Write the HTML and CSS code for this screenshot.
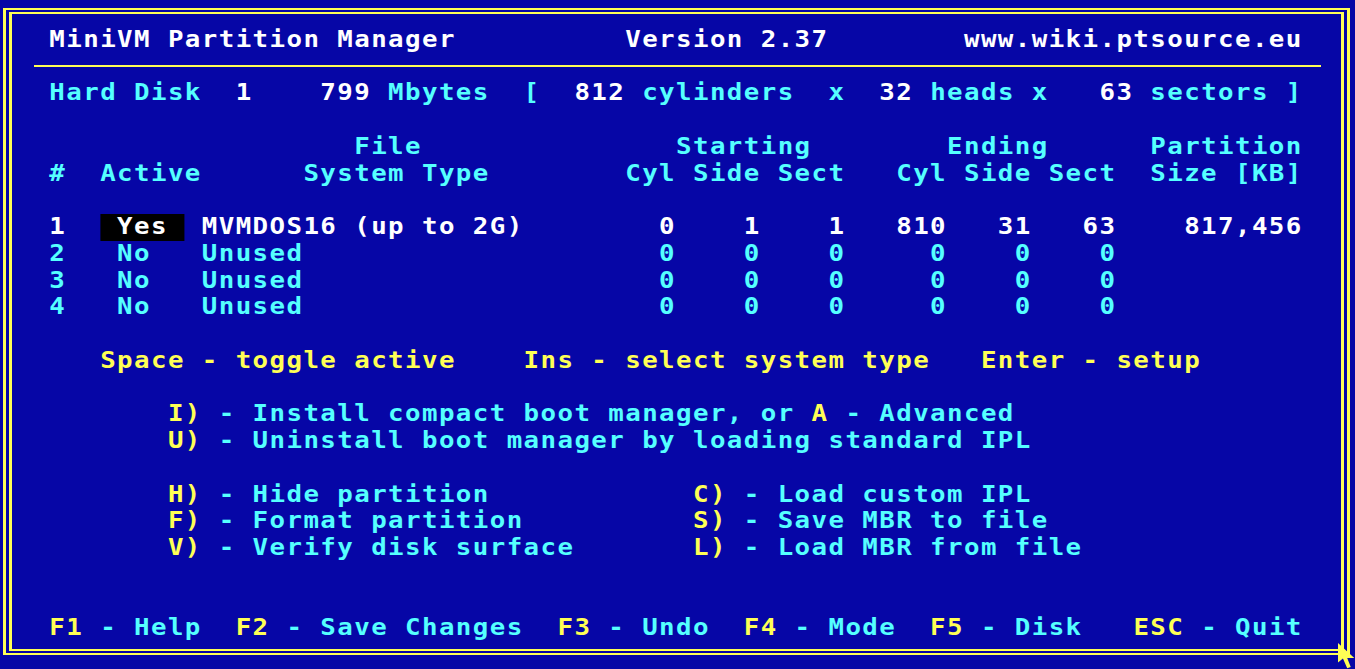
FILE: index.html
```html
<!DOCTYPE html>
<html>
<head>
<meta charset="utf-8">
<title>MiniVM Partition Manager</title>
<link rel="stylesheet" href="styles.css">
</head>
<body>
<div class="screen">
<div class="r"></div>
<div class="r t w">   MiniVM Partition Manager          Version 2.37        www.wiki.ptsource.eu</div>
<div class="r"><div class="hr"></div></div>
<div class="r t">   Hard Disk  <span class="w">1</span>    <span class="w">799</span> Mbytes  [  <span class="w">812</span> cylinders  x  <span class="w">32</span> heads x   <span class="w">63</span> sectors ]</div>
<div class="r"></div>
<div class="r t">                     File               Starting        Ending      Partition</div>
<div class="r t">   #  Active      System Type        Cyl Side Sect   Cyl Side Sect  Size [KB]</div>
<div class="r"></div>
<div class="r t w">   1  <span class="inv"> Yes </span> MVMDOS16 (up to 2G)        0    1    1   810   31   63    817,456</div>
<div class="r t">   2   No   Unused                     0    0    0     0    0    0</div>
<div class="r t">   3   No   Unused                     0    0    0     0    0    0</div>
<div class="r t">   4   No   Unused                     0    0    0     0    0    0</div>
<div class="r"></div>
<div class="r t y">      Space - toggle active    Ins - select system type   Enter - setup</div>
<div class="r"></div>
<div class="r t">          <span class="y">I)</span> - Install compact boot manager, or <span class="y">A</span> - Advanced</div>
<div class="r t">          <span class="y">U)</span> - Uninstall boot manager by loading standard IPL</div>
<div class="r"></div>
<div class="r t">          <span class="y">H)</span> - Hide partition            <span class="y">C)</span> - Load custom IPL</div>
<div class="r t">          <span class="y">F)</span> - Format partition          <span class="y">S)</span> - Save MBR to file</div>
<div class="r t">          <span class="y">V)</span> - Verify disk surface       <span class="y">L)</span> - Load MBR from file</div>
<div class="r"></div>
<div class="r"></div>
<div class="r t">   <span class="y">F1</span> - Help  <span class="y">F2</span> - Save Changes  <span class="y">F3</span> - Undo  <span class="y">F4</span> - Mode  <span class="y">F5</span> - Disk   <span class="y">ESC</span> - Quit</div>
<div class="r"></div>
<svg class="cursor" width="17" height="26" viewBox="0 0 12 20" preserveAspectRatio="none"><polygon points="0,0 0,15 3.5,12 6.5,19.5 9,18.5 6.5,11.5 11.5,11.5" fill="#ffff55"/></svg>
</div>
</body>
</html>
```

FILE: styles.css
```css
html, body {
  margin: 0;
  padding: 0;
  background: #0606a6;
}
body {
  width: 1355px;
  height: 669px;
  overflow: hidden;
}
.screen {
  position: relative;
  width: 1355px;
  height: 669px;
  overflow: hidden;
  background: #0606a6;
  font-family: "DejaVu Sans Mono", monospace;
  font-weight: bold;
  font-size: 23px;
  color: #55ffff;
}
.screen::before {
  content: "";
  position: absolute;
  left: 3px;
  top: 8px;
  width: 1347px;
  height: 647px;
  box-sizing: border-box;
  border-style: double;
  border-color: #ffff55;
  border-width: 6px 9px;
  pointer-events: none;
}
.r {
  height: 26.76px;
  line-height: 24px;
  white-space: pre;
}
.t {
  width: 1208px;
  letter-spacing: 1.276px;
  transform: translateX(-1.5px) scaleX(1.12);
  transform-origin: 0 0;
}
.w { color: #ffffff; }
.y { color: #ffff55; }
.c { color: #55ffff; }
.inv {
  display: inline-block;
  vertical-align: top;
  height: 26.76px;
  background: #000000;
  color: #ffffff;
}
.hr {
  margin-left: 33.875px;
  width: 1287.25px;
  height: 2px;
  position: relative;
  top: 11.5px;
  background: #ffff55;
}
.cursor {
  position: absolute;
  left: 1338px;
  top: 643px;
}
```
